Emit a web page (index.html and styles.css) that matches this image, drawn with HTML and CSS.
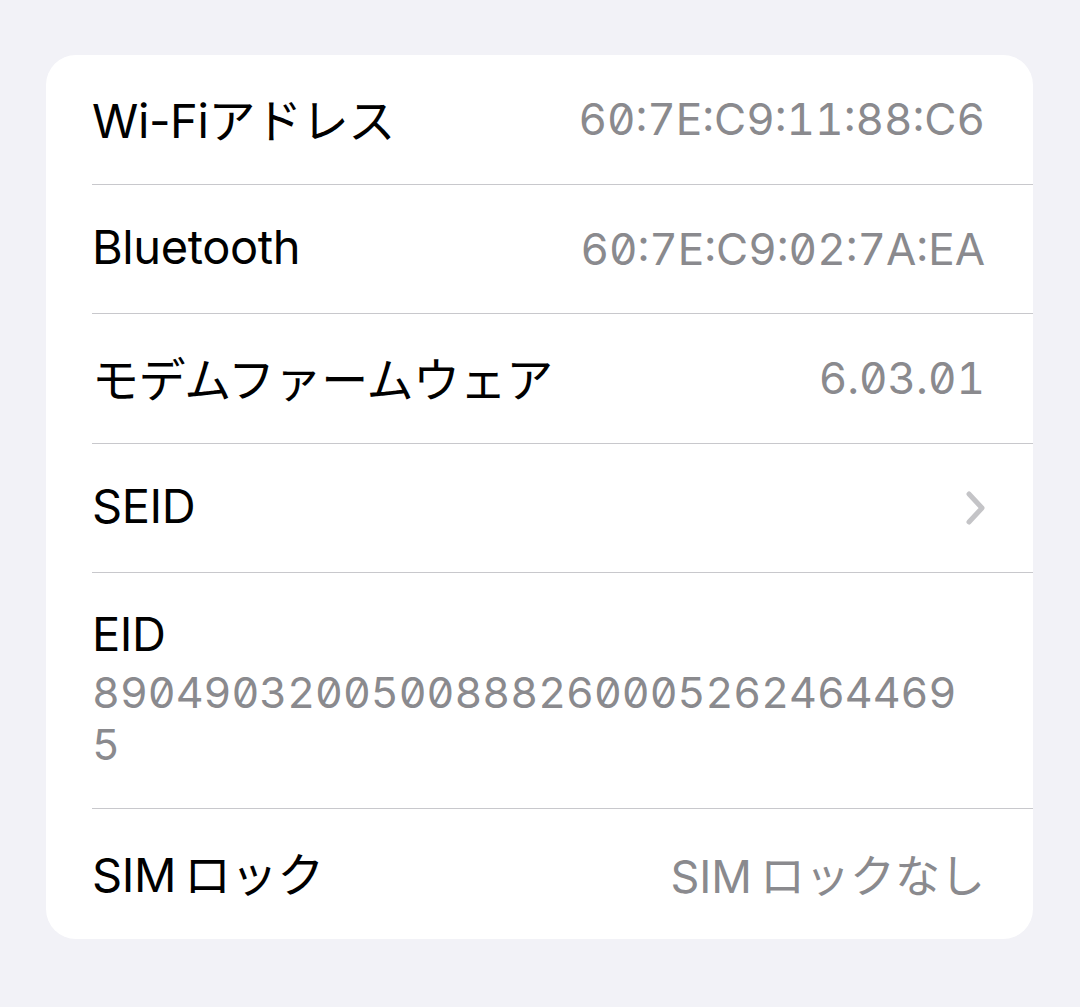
FILE: index.html
```html
<!DOCTYPE html>
<html lang="ja">
<head>
    <meta charset="UTF-8">
    <meta name="viewport" content="width=device-width, initial-scale=1.0">
    <title>情報</title>
    <link rel="stylesheet" href="styles.css">
</head>
<body>
    <div class="list">
        <div class="row">
            <span class="label">Wi-Fiアドレス</span>
            <span class="value">60:7E:C9:11:88:C6</span>
        </div>
        <div class="row">
            <span class="label">Bluetooth</span>
            <span class="value">60:7E:C9:02:7A:EA</span>
        </div>
        <div class="row">
            <span class="label">モデムファームウェア</span>
            <span class="value">6.03.01</span>
        </div>
        <div class="row">
            <span class="label">SEID</span>
            <svg class="chevron" width="22" height="36" viewBox="0 0 22 36">
                <path d="M4 4 L17 18 L4 32" fill="none" stroke="#c4c4c7" stroke-width="5" stroke-linecap="round" stroke-linejoin="round"/>
            </svg>
        </div>
        <div class="row row-stacked">
            <span class="label">EID</span>
            <span class="value eid-value">89049032005008882600052624644695</span>
        </div>
        <div class="row">
            <span class="label">SIM<span class="gap"></span>ロック</span>
            <span class="value value-text">SIM<span class="gap"></span>ロックなし</span>
        </div>
    </div>
</body>
</html>
```

FILE: styles.css
```css
body {
    margin: 0;
    background-color: #f2f2f7;
    font-family: Inter, "Noto Sans CJK JP", sans-serif;
    color: #000;
}
.list {
    margin: 55px 47px 0 46px;
    background-color: #fff;
    border-radius: 30px;
    overflow: hidden;
}
.row {
    display: flex;
    align-items: center;
    justify-content: space-between;
    height: 129.5px;
    margin-left: 46px;
    padding-right: 48px;
    padding-bottom: 4px;
    border-bottom: 1.5px solid #c8c8cc;
    box-sizing: border-box;
}
.row:last-child {
    border-bottom: none;
}
.label {
    font-size: 47px;
    letter-spacing: -0.4px;
}
.value {
    font-size: 44px;
    color: #8a8a8e;
    font-feature-settings: "tnum", "zero";
    padding-top: 4px;
}
.value-text {
    font-size: 45px;
}
/* iOS puts a little space between latin and kana */
.gap {
    display: inline-block;
    width: 8px;
}
.chevron {
    margin-right: -2px;
    margin-top: 4px;
}
.row-stacked {
    flex-direction: column;
    align-items: flex-start;
    justify-content: center;
    height: 236px;
    padding-bottom: 6px;
}
.eid-value {
    font-size: 43px;
    line-height: 52px;
    margin-top: 4px;
    padding-top: 0;
    max-width: 875px;
    word-break: break-all;
}
```
